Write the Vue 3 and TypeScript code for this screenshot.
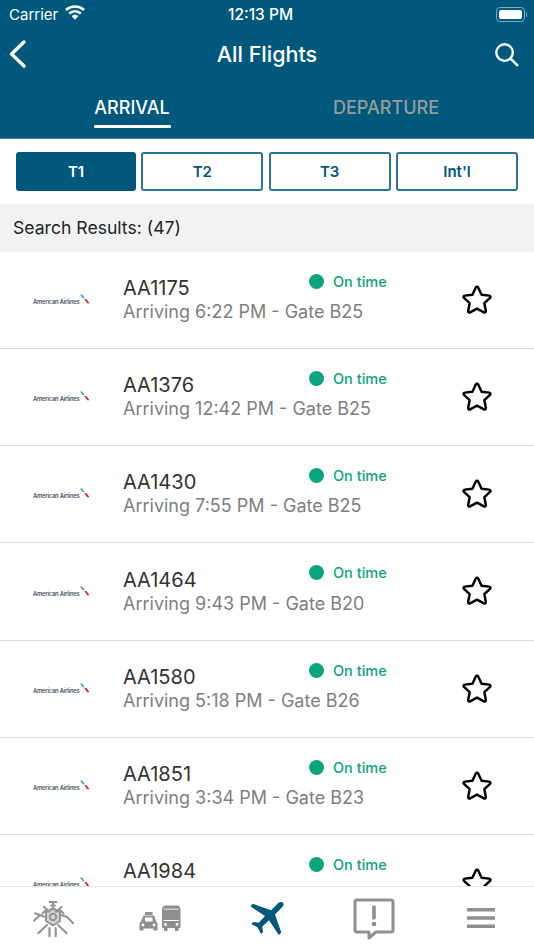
<script setup lang="ts">
interface Flight { code: string; detail: string }
const flights: Flight[] = [
  { code: 'AA1175', detail: 'Arriving 6:22 PM - Gate B25' },
  { code: 'AA1376', detail: 'Arriving 12:42 PM - Gate B25' },
  { code: 'AA1430', detail: 'Arriving 7:55 PM - Gate B25' },
  { code: 'AA1464', detail: 'Arriving 9:43 PM - Gate B20' },
  { code: 'AA1580', detail: 'Arriving 5:18 PM - Gate B26' },
  { code: 'AA1851', detail: 'Arriving 3:34 PM - Gate B23' },
  { code: 'AA1984', detail: '' },
]
const terminals = ['T1', 'T2', 'T3', "Int'l"]
</script>

<template>
  <div class="screen">
    <header class="header">
      <div class="status">
        <div class="status-left">
          <span>Carrier</span>
          <svg class="wifi" viewBox="0 0 20 15" width="20" height="15">
            <path d="M10 14.800 6.600 11a5 5 0 0 1 6.800 0Z" fill="#fff" />
            <path d="M1 5a13.500 13.500 0 0 1 18 0" fill="none" stroke="#fff" stroke-width="2.600" />
            <path d="M4.200 8.400a8.800 8.800 0 0 1 11.600 0" fill="none" stroke="#fff" stroke-width="2.600" />
          </svg>
        </div>
        <span class="clock">12:13 PM</span>
        <div class="battery"><i class="battery-fill"></i></div>
      </div>
      <div class="nav">
        <svg viewBox="0 0 20 30" width="20" height="30">
          <path d="M17 3 4.500 15 17 27" fill="none" stroke="#fff" stroke-width="3.400" stroke-linecap="round" stroke-linejoin="round" />
        </svg>
        <h1 class="title">All Flights</h1>
        <svg viewBox="0 0 26 26" width="25" height="25">
          <circle cx="11" cy="11" r="8.600" fill="none" stroke="#fff" stroke-width="2.500" />
          <path d="m17.500 17.500 6.600 6.600" stroke="#fff" stroke-width="2.800" stroke-linecap="round" />
        </svg>
      </div>
      <div class="tabs">
        <div class="tab tab-active">ARRIVAL</div>
        <div class="tab">DEPARTURE</div>
      </div>
    </header>

    <div class="terminals">
      <button v-for="(t, i) in terminals" :key="t" class="term" :class="{ 'term-on': i === 0 }">{{ t }}</button>
    </div>

    <div class="results">Search Results: (47)</div>

    <main class="list">
      <article v-for="f in flights" :key="f.code" class="row">
        <div class="logo">
          <span class="logo-text">American Airlines</span>
          <svg viewBox="0 0 12 11" width="10" height="10" class="logo-mark">
            <path d="M0 0h2.400l3.400 4.600H3.600Z" fill="#2a9fd0" />
            <path d="M5.200 5.600h2.400l3.800 5H8.600Z" fill="#d3202e" />
          </svg>
        </div>
        <div class="info">
          <div class="code">{{ f.code }}</div>
          <div class="arr">{{ f.detail }}</div>
        </div>
        <div class="state"><i class="dot"></i>On time</div>
        <svg class="star" viewBox="0 0 30 30" width="32" height="32">
          <path d="M15 2.600c.5 0 .9.300 1.100.7l3.200 6.700 7.200.9c1.100.1 1.500 1.400.7 2.100l-5.300 5 1.400 7.300c.2 1-.9 1.800-1.800 1.300L15 23.100l-6.500 3.500c-.9.500-2-.3-1.800-1.300l1.400-7.300-5.300-5c-.8-.7-.4-2 .7-2.100l7.200-.9 3.200-6.700c.2-.4.600-.7 1.100-.7Z" fill="none" stroke="#000" stroke-width="2.300" stroke-linejoin="round" />
        </svg>
      </article>
    </main>

    <nav class="bar">
      <svg viewBox="0 0 41 36" width="41" height="36" class="ico ico-terminal">
        <g fill="none" stroke="#949494" stroke-width="2" stroke-linecap="round" stroke-linejoin="round">
          <path d="M20 7.500 27 11v9l-7 4.500-7-4.500v-9Z" fill="#d4d4d4" />
          <circle cx="20" cy="16" r="3.200" />
          <path d="M20 1v7M16.500 1h7M18 4.500h4M11 5.700l5.300 5M28.700 5.700 23 10.700M2 12.300l9.500 3.400M1 19.700 7 14M27 14l6.700 1.700 6.600 6.600M5.300 32.300 14 24M33.700 32.300 25 24M12.500 9.500l-3 3M27.500 9.500l3 3" />
          <path d="M16.500 27v8M22.700 27v8" stroke-width="2.200" />
        </g>
      </svg>
      <svg viewBox="0 0 44 28" width="44" height="28" class="ico ico-transit">
        <g fill="#8f8f8f">
          <path d="M7 7h7.500v3H7Z" />
          <path d="M5.500 10.500h10.500l2.500 6.500c.7.500 1 1 1 2v6.500h-4v-2H5.500v2h-4V19c0-1 .3-1.500 1-2Z" />
          <path d="M24 4.500C24 2 25.500.5 28 .5h10.500c2.500 0 4 1.500 4 4V23h-2v3h-3.500v-3h-7.500v3H26v-3h-2Z" />
        </g>
        <path d="M25.500 4.200h15.500" stroke="#dcdcdc" stroke-width="1.200" />
        <path d="M25.500 15.500h15.500" stroke="#fff" stroke-width="1" />
        <rect x="7" y="12.500" width="7.500" height="4" fill="#fff" />
        <circle cx="5" cy="20" r="1.400" fill="#fff" />
        <circle cx="16" cy="20" r="1.400" fill="#fff" />
        <circle cx="27.500" cy="19.500" r="1.400" fill="#fff" />
        <circle cx="39" cy="19.500" r="1.400" fill="#fff" />
      </svg>
      <svg viewBox="0 0 36 36" width="36" height="36" class="ico ico-plane">
        <path d="M34 1.800c-1.400-1.400-3.800-.8-5.200.6L22 9.200 4 2.800 1.500 5.300 16 15l-6.400 6.800-5.300-.8L2.300 23l6.300 3.500L12 33l2-2-.8-5.300L20 19.300 29.800 34l2.500-2.500L26 13.400l6.800-6.800C34.200 5.200 35.400 3.200 34 1.800Z" fill="#00587c" />
      </svg>
      <svg viewBox="0 0 42 42" width="42" height="42" class="ico ico-alert">
        <path d="M4 2h34a2 2 0 0 1 2 2v28a2 2 0 0 1-2 2H23l-7 6v-6H4a2 2 0 0 1-2-2V4a2 2 0 0 1 2-2Z" fill="none" stroke="#8f8f8f" stroke-width="3" stroke-linejoin="round" />
        <path d="M21 9v11" stroke="#8f8f8f" stroke-width="3.600" stroke-linecap="round" />
        <circle cx="21" cy="26" r="2.300" fill="#8f8f8f" />
      </svg>
      <svg viewBox="0 0 28 20" width="28" height="20" class="ico ico-menu">
        <path d="M0 1.750h28M0 10h28M0 18.250h28" stroke="#8f8f8f" stroke-width="3.500" />
      </svg>
    </nav>
  </div>
</template>

<style scoped>
.screen {
  width: 534px;
  height: 950px;
  display: flex;
  flex-direction: column;
  overflow: hidden;
  background: #fff;
  font-family: Inter, "Liberation Sans", sans-serif;
}
.header {
  flex: none;
  height: 139px;
  background: #00587c;
  color: #fff;
  box-shadow: inset 0 -1px 0 #3d7f9c;
}
.status {
  height: 28px;
  padding: 0 9px;
  display: flex;
  align-items: center;
  justify-content: space-between;
  font-size: 15px;
  position: relative;
}
.status-left {
  display: flex;
  align-items: center;
  gap: 7px;
  font-size: 15px;
}
.wifi { margin-top: -3px; }
.clock {
  position: absolute;
  left: 228px;
  top: 5px;
  font-weight: 500;
  font-size: 15.500px;
}
.battery {
  width: 29px;
  height: 15px;
  border: 1px solid #7fa9bc;
  border-radius: 4px;
  padding: 2px;
  box-sizing: border-box;
  position: relative;
}
.battery::after {
  content: "";
  position: absolute;
  right: -3px;
  top: 4px;
  width: 1.500px;
  height: 5px;
  background: #7fa9bc;
  border-radius: 0 1px 1px 0;
}
.battery-fill {
  display: block;
  height: 100%;
  background: #fff;
  border-radius: 2px;
}
.nav {
  height: 52px;
  padding: 0 15px 0 7px;
  display: flex;
  align-items: center;
  justify-content: space-between;
  position: relative;
}
.title {
  position: absolute;
  left: 0;
  right: 0;
  margin: 0;
  text-align: center;
  font-size: 21.500px;
  font-weight: 500;
}
.tabs {
  display: grid;
  grid-template-columns: 264px 244px;
  padding-top: 9.500px;
}
.tab {
  height: 35px;
  display: flex;
  justify-content: center;
  align-items: center;
  font-size: 18px;
  font-weight: 500;
  color: #9b9b9b;
}
.tab-active {
  color: #fff;
  position: relative;
}
.tab-active::after {
  content: "";
  position: absolute;
  left: 94px;
  width: 77px;
  bottom: -3px;
  height: 3px;
  background: #fff;
  border-radius: 1px;
}
.terminals {
  flex: none;
  display: grid;
  grid-template-columns: 120px 122px 122px 122px;
  gap: 5.330px;
  padding: 13px 16px 0;
  height: 65px;
  box-sizing: border-box;
}
.term {
  height: 39px;
  border: 2px solid #2f7596;
  border-radius: 3px;
  background: #fff;
  color: #00587c;
  font: 600 15px Inter, "Liberation Sans", sans-serif;
  padding: 0;
}
.term-on {
  background: #00587c;
  border-color: #00587c;
  color: #fff;
}
.results {
  flex: none;
  height: 48px;
  display: flex;
  align-items: center;
  padding: 0 0 1px 13px;
  box-sizing: border-box;
  background: #f2f2f2;
  font-size: 17.600px;
  color: #222;
}
.list {
  flex: 1;
  min-height: 0;
  overflow: hidden;
}
.row {
  height: 97.170px;
  box-sizing: border-box;
  border-bottom: 1px solid #dcdcdc;
  position: relative;
  display: flex;
  align-items: center;
}
.logo {
  width: 123px;
  flex: none;
  display: flex;
  align-items: center;
  padding-left: 33px;
  box-sizing: border-box;
  margin-top: 3px;
}
.logo-text {
  font: 600 5.800px Inter, "Liberation Sans", sans-serif;
  letter-spacing: -0.200px;
  color: #4a5266;
  white-space: nowrap;
}
.logo-mark { margin-left: 1px; margin-top: -5px; }
.info { flex: 1; }
.code {
  font-size: 20px;
  line-height: 24px;
  color: #333;
}
.arr {
  font-size: 18px;
  line-height: 24px;
  min-height: 24px;
  color: #7f7f7f;
  white-space: nowrap;
}
.state {
  position: absolute;
  left: 309px;
  top: 21px;
  display: flex;
  align-items: center;
  gap: 9px;
  font-size: 14.500px;
  font-weight: 500;
  color: #0aa57f;
}
.dot {
  width: 15px;
  height: 15px;
  border-radius: 50%;
  background: #0aa57f;
}
.star {
  position: absolute;
  left: 461px;
  top: 32px;
}
.bar {
  flex: none;
  height: 64px;
  box-sizing: border-box;
  border-top: 1px solid #e4e4e4;
  background: #fff;
  position: relative;
  z-index: 1;
  display: grid;
  grid-template-columns: 107px 107px 106px 107px 107px;
  justify-items: center;
  align-items: center;
  padding-bottom: 4px;
}
.ico { display: block; }
.ico-terminal { margin-top: 5px; }
.ico-transit { margin-top: 4px; margin-right: 2px; }
.ico-plane { margin-top: 5px; }
.ico-alert { margin-top: 4px; }
.ico-menu { margin-top: 2px; }
</style>
<style>
html, body { margin: 0; background: #fff; }
</style>
